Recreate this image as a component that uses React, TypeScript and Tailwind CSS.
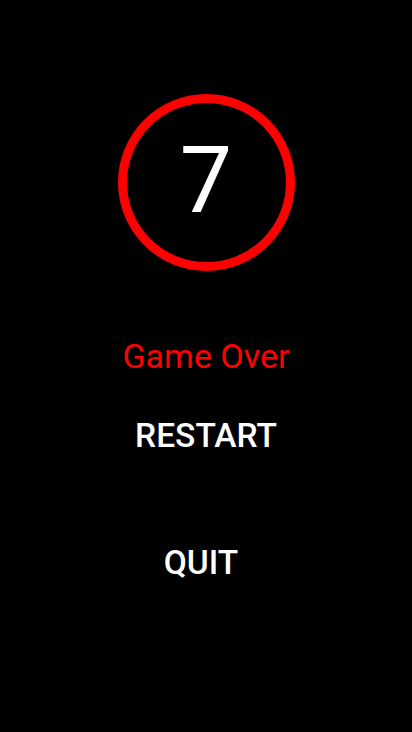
export default function App() {
  return (
    <div
      className="flex h-[732px] w-full flex-col items-center bg-black"
      style={{ fontFamily: 'Roboto, "Noto Sans", sans-serif' }}
    >
      <div className="mt-[94px] flex h-[177px] w-[177px] items-center justify-center rounded-full border-[9px] border-[#ff0000]">
        <span className="-mt-[4px] text-[93px] font-normal leading-none text-white">7</span>
      </div>
      <p className="mt-[65px] text-[34px] leading-[40px] text-[#ff0000]">Game Over</p>
      <button className="mt-[40px] text-[33.5px] font-medium leading-[40px] text-white">RESTART</button>
      <button className="mt-[87px] mr-[10px] text-[33.5px] font-medium leading-[40px] text-white">QUIT</button>
    </div>
  );
}
